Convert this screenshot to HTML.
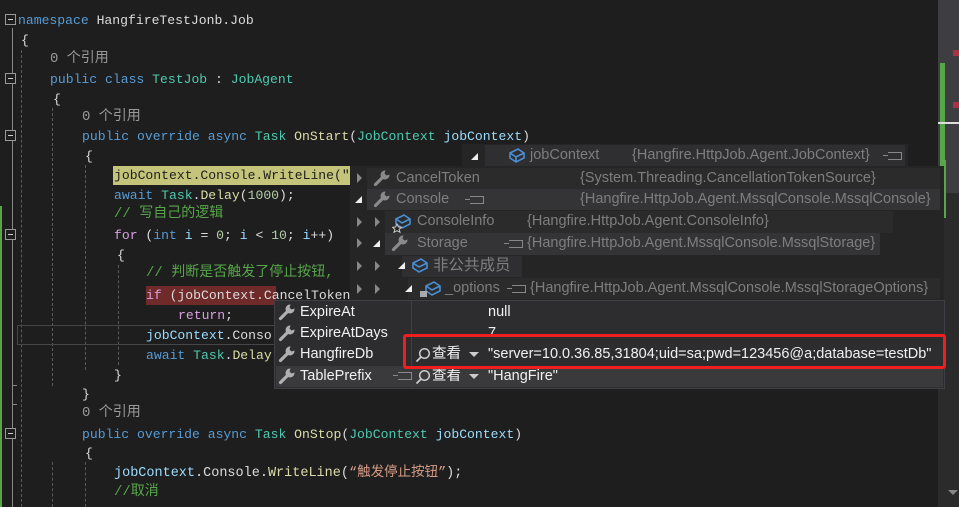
<!DOCTYPE html>
<html><head><meta charset="utf-8"><style>
*{margin:0;padding:0;box-sizing:border-box}
body{width:959px;height:507px;background:#1e1e1e;overflow:hidden;position:relative;font-family:"Liberation Mono","Noto Sans CJK SC",monospace}
.l{position:absolute;white-space:pre;font-size:13.1px;line-height:19px;color:#dcdcdc}
.k{color:#569cd6}.t{color:#4ec9b0}.m{color:#dcdcaa}.c{color:#57a64a}.s{color:#d69d85}.p{color:#d8a0df}.n{color:#b5cea8}.v{color:#9cdcfe}.g{color:#999}
.a{position:absolute}
.fold{position:absolute;left:5px;width:11px;height:11px;border:1px solid #999;background:#1e1e1e}
.fold:after{content:"";position:absolute;left:2px;top:4px;width:5px;height:1px;background:#ccc}
.dv{position:absolute;width:0;border-left:1px dashed #5a5a5a}
.pp{position:absolute;font-family:"Liberation Sans","Noto Sans CJK SC",sans-serif;font-size:14.5px;white-space:pre;line-height:21px}
.dim{color:#7e7e7e}
.w{color:#f1f1f1}
.tri{position:absolute;width:0;height:0;border-top:5px solid transparent;border-bottom:5px solid transparent;border-left:5px solid #888}
.tri2{position:absolute;width:0;height:0;border-left:7px solid transparent;border-bottom:7px solid #eee}
.pin{position:absolute;width:14px;height:8px;border:1px solid #888;border-left:none}
.pin:before{content:"";position:absolute;left:-5px;top:2px;width:5px;height:1px;background:#888}
.wr{position:absolute;width:18px;height:18px}
.dd{position:absolute;width:0;height:0;border-left:5px solid transparent;border-right:5px solid transparent;border-top:5px solid #ccc}
</style></head><body>
<svg width="0" height="0" style="position:absolute"><defs>
<symbol id="wr" viewBox="0 0 18 18"><path d="M12.5 1.5 a4.5 4.5 0 1 0 4 4 l-3 1 -2-2 1-3z" fill="currentColor"/><path d="M10 8 L2.5 15.5" stroke="currentColor" stroke-width="3.2" stroke-linecap="round"/></symbol>
<symbol id="mg" viewBox="0 0 16 16"><circle cx="9.5" cy="6.5" r="4.8" fill="none" stroke="#ccc" stroke-width="1.5"/><path d="M6 10 L1.5 14.5" stroke="#ccc" stroke-width="1.8"/></symbol>
</defs></svg>
<!-- left gutter -->
<div class="a" style="left:0;top:206px;width:2px;height:301px;background:#57a64a"></div>
<div class="a" style="left:12px;top:28px;width:1px;height:479px;background:#888"></div>
<div class="a" style="left:12px;top:385px;width:5px;height:1px;background:#888"></div>
<div class="a" style="left:12px;top:404px;width:5px;height:1px;background:#888"></div>
<div class="fold" style="top:14px"></div>
<div class="fold" style="top:73px"></div>
<div class="fold" style="top:130px"></div>
<div class="fold" style="top:229px"></div>
<div class="fold" style="top:428px"></div>
<div class="dv" style="left:21px;top:50px;height:457px"></div>
<div class="dv" style="left:52px;top:108px;height:278px"></div>
<div class="dv" style="left:52px;top:462px;height:45px"></div>
<div class="dv" style="left:85px;top:165px;height:205px"></div>
<div class="dv" style="left:85px;top:462px;height:45px"></div>
<div class="dv" style="left:118px;top:265px;height:100px"></div>
<!-- highlights -->
<div class="a" style="left:113px;top:166px;width:240px;height:19px;background:#c4c47a"></div>
<div class="a" style="left:146px;top:286px;width:130px;height:19px;background:#6f2a2a"></div>
<div class="a" style="left:17px;top:325px;width:260px;height:20px;border:1px solid #464646"></div>
<!-- code -->
<div class="l" style="left:18px;top:11px"><span class="k">namespace</span> HangfireTestJonb.Job</div>
<div class="l" style="left:21px;top:31px">{</div>
<div class="l g" style="left:50px;top:50px;font-size:14px">0 个引用</div>
<div class="l" style="left:50px;top:70px"><span class="k">public class</span> <span class="t">TestJob</span> : <span class="t">JobAgent</span></div>
<div class="l" style="left:53px;top:90px">{</div>
<div class="l g" style="left:82px;top:108px;font-size:14px">0 个引用</div>
<div class="l" style="left:82px;top:127px"><span class="k">public override async</span> <span class="t">Task</span> <span class="m">OnStart</span>(<span class="t">JobContext</span> <span class="v">jobContext</span>)</div>
<div class="l" style="left:85px;top:147px">{</div>
<div class="l" style="left:114px;top:166px;color:#1e1e1e">jobContext.Console.WriteLine(&quot;</div>
<div class="l" style="left:114px;top:186px"><span class="k">await</span> <span class="t">Task</span>.<span class="m">Delay</span>(<span class="n">1000</span>);</div>
<div class="l c" style="left:114px;top:205px;font-size:14px">// 写自己的逻辑</div>
<div class="l" style="left:114px;top:226px"><span class="p">for</span> (<span class="k">int</span> <span class="v">i</span> = <span class="n">0</span>; <span class="v">i</span> &lt; <span class="n">10</span>; <span class="v">i</span>++)</div>
<div class="l" style="left:117px;top:246px">{</div>
<div class="l c" style="left:146px;top:264px;font-size:14px">// 判断是否触发了停止按钮,</div>
<div class="l" style="left:146px;top:286px"><span class="p">if</span> (jobContext.CancelToken.</div>
<div class="l p" style="left:178px;top:306px">return<span style="color:#dcdcdc">;</span></div>
<div class="l v" style="left:146px;top:326px">jobContext<span style="color:#dcdcdc">.Conso</span></div>
<div class="l" style="left:146px;top:346px"><span class="k">await</span> <span class="t">Task</span>.<span class="m">Delay</span></div>
<div class="l" style="left:114px;top:366px">}</div>
<div class="l" style="left:82px;top:385px">}</div>
<div class="l g" style="left:82px;top:404px;font-size:14px">0 个引用</div>
<div class="l" style="left:82px;top:425px"><span class="k">public override async</span> <span class="t">Task</span> <span class="m">OnStop</span>(<span class="t">JobContext</span> <span class="v">jobContext</span>)</div>
<div class="l" style="left:85px;top:444px">{</div>
<div class="l" style="left:114px;top:464px;font-size:13.5px"><span class="v">jobContext</span>.Console.<span class="m">WriteLine</span>(<span class="s">“触发停止按钮”</span>);</div>
<div class="l c" style="left:114px;top:483px;font-size:14px">//取消</div>
<!-- scrollbar -->
<div class="a" style="left:938px;top:0;width:21px;height:193px;background:#3e3e42"></div>
<div class="a" style="left:938px;top:193px;width:21px;height:314px;background:#2b2b2b"></div>
<div class="a" style="left:940px;top:63px;width:5px;height:104px;background:#57a64a"></div>
<div class="a" style="left:943px;top:160px;width:3px;height:58px;background:#57a64a"></div>
<div class="a" style="left:953px;top:50px;width:6px;height:6px;background:#a83240"></div>
<div class="a" style="left:953px;top:102px;width:6px;height:6px;background:#a83240"></div>
<div class="a" style="left:938px;top:122px;width:21px;height:2px;background:#ddd"></div>
<div class="a" style="left:948px;top:490px;border-left:5px solid transparent;border-right:5px solid transparent;border-top:5px solid #888"></div>
<!-- jobContext row -->
<div class="a" style="left:462px;top:144px;width:446px;height:23px;background:#252526"></div>
<div class="a" style="left:485px;top:145px;width:420px;height:21px;background:#2f2f31"></div>
<div class="tri2" style="left:471px;top:153px"></div>
<svg class="a" style="left:507px;top:146px" width="20" height="18"><path d="M3 7 L11 3 L17 7 L17 12 L9 16 L3 12 Z M3 7 L9 11 L17 7 M9 11 L9 16" fill="none" stroke="#4a8fd6" stroke-width="1.6"/></svg>
<div class="pp dim" style="left:530px;top:145px">jobContext</div>
<div class="pp dim" style="left:632px;top:145px">{Hangfire.HttpJob.Agent.JobContext}</div>
<div class="pin" style="left:888px;top:152px"></div>
<!-- popup 2 -->
<div class="a" style="left:350px;top:166px;width:594px;height:134px;background:#252526"></div>
<div class="a" style="left:367px;top:168px;width:573px;height:21px;background:#2b2b2b"></div>
<div class="a" style="left:367px;top:189px;width:573px;height:21px;background:#343436"></div>
<div class="a" style="left:385px;top:211px;width:508px;height:22px;background:#2b2b2b"></div>
<div class="a" style="left:385px;top:233px;width:495px;height:22px;background:#343436"></div>
<div class="a" style="left:402px;top:256px;width:120px;height:21px;background:#2f2f31"></div>
<div class="a" style="left:408px;top:278px;width:532px;height:21px;background:#2b2b2b"></div>
<div class="tri" style="left:357px;top:173px"></div>
<div class="tri2" style="left:355px;top:196px"></div>
<div class="tri" style="left:357px;top:217px"></div>
<div class="tri" style="left:357px;top:238px"></div>
<div class="tri" style="left:357px;top:261px"></div>
<div class="tri" style="left:357px;top:284px"></div>
<div class="tri" style="left:375px;top:217px"></div>
<div class="tri2" style="left:373px;top:240px"></div>
<div class="tri" style="left:375px;top:261px"></div>
<div class="tri" style="left:375px;top:284px"></div>
<div class="tri2" style="left:398px;top:262px"></div>
<div class="tri2" style="left:405px;top:285px"></div>
<svg class="wr" style="left:373px;top:169px;color:#8a8a8a"><use href="#wr"/></svg>
<div class="pp dim" style="left:396px;top:168px">CancelToken</div>
<div class="pp dim" style="left:580px;top:168px">{System.Threading.CancellationTokenSource}</div>
<svg class="wr" style="left:373px;top:190px;color:#8a8a8a"><use href="#wr"/></svg>
<div class="pp dim" style="left:396px;top:189px">Console</div>
<div class="pin" style="left:470px;top:196px"></div>
<div class="pp dim" style="left:580px;top:189px">{Hangfire.HttpJob.Agent.MssqlConsole.MssqlConsole}</div>
<svg class="a" style="left:392px;top:213px" width="20" height="20"><path d="M4 6 L12 2 L18 6 L18 11 L10 15 L4 11 Z M4 6 L10 10 L18 6" fill="none" stroke="#4a8fd6" stroke-width="1.6"/><path d="M5 11 l1.5 3 3 .3 -2.3 2 .8 3 -3-1.6 -3 1.6 .8-3 -2.3-2 3-.3z" fill="#252526" stroke="#ccc" stroke-width="1"/></svg>
<div class="pp dim" style="left:417px;top:211px">ConsoleInfo</div>
<div class="pp dim" style="left:527px;top:211px">{Hangfire.HttpJob.Agent.ConsoleInfo}</div>
<svg class="wr" style="left:391px;top:234px;color:#8a8a8a"><use href="#wr"/></svg>
<div class="pp dim" style="left:417px;top:233px">Storage</div>
<div class="pin" style="left:509px;top:240px"></div>
<div class="pp dim" style="left:527px;top:233px">{Hangfire.HttpJob.Agent.MssqlConsole.MssqlStorage}</div>
<svg class="a" style="left:410px;top:256px" width="20" height="18"><path d="M3 7 L11 3 L17 7 L17 12 L9 16 L3 12 Z M3 7 L9 11 L17 7" fill="none" stroke="#4a8fd6" stroke-width="1.6"/></svg>
<div class="pp dim" style="left:433px;top:255px;font-size:15.5px">非公共成员</div>
<svg class="a" style="left:418px;top:279px" width="26" height="20"><path d="M8 7 L16 3 L22 7 L22 12 L14 16 L8 12 Z M8 7 L14 11 L22 7" fill="none" stroke="#4a8fd6" stroke-width="1.6"/><rect x="2" y="12" width="7" height="6" fill="#aaa"/></svg>
<div class="pp dim" style="left:445px;top:278px">_options</div>
<div class="pin" style="left:512px;top:285px"></div>
<div class="pp dim" style="left:530px;top:278px">{Hangfire.HttpJob.Agent.MssqlConsole.MssqlStorageOptions}</div>
<!-- bottom popup -->
<div class="a" style="left:274px;top:300px;width:671px;height:89px;background:#2d2d30;border:1px solid #3f3f46"></div>
<div class="a" style="left:411px;top:301px;width:1px;height:87px;background:#3f3f46"></div>
<div class="a" style="left:276px;top:366px;width:667px;height:21px;background:#3a3a3c"></div>
<svg class="wr" style="left:278px;top:303px;color:#b0b0b0"><use href="#wr"/></svg>
<div class="pp w" style="left:300px;top:302px">ExpireAt</div>
<div class="pp w" style="left:488px;top:302px">null</div>
<svg class="wr" style="left:278px;top:324px;color:#b0b0b0"><use href="#wr"/></svg>
<div class="pp w" style="left:300px;top:323px">ExpireAtDays</div>
<div class="pp w" style="left:488px;top:323px">7</div>
<svg class="wr" style="left:278px;top:345px;color:#b0b0b0"><use href="#wr"/></svg>
<div class="pp w" style="left:300px;top:344px">HangfireDb</div>
<svg class="a" style="left:415px;top:347px" width="16" height="16"><use href="#mg"/></svg>
<div class="pp w" style="left:432px;top:344px">查看</div>
<div class="dd" style="left:469px;top:352px"></div>
<div class="pp w" style="left:488px;top:344px">"server=10.0.36.85,31804;uid=sa;pwd=123456@a;database=testDb"</div>
<svg class="wr" style="left:278px;top:367px;color:#b0b0b0"><use href="#wr"/></svg>
<div class="pp w" style="left:300px;top:366px">TablePrefix</div>
<div class="pin" style="left:398px;top:372px"></div>
<svg class="a" style="left:415px;top:369px" width="16" height="16"><use href="#mg"/></svg>
<div class="pp w" style="left:432px;top:366px">查看</div>
<div class="dd" style="left:469px;top:374px"></div>
<div class="pp w" style="left:488px;top:366px">"HangFire"</div>
<div class="a" style="left:403px;top:334px;width:543px;height:35px;border:3px solid #f01e1e;border-radius:3px"></div>
</body></html>
